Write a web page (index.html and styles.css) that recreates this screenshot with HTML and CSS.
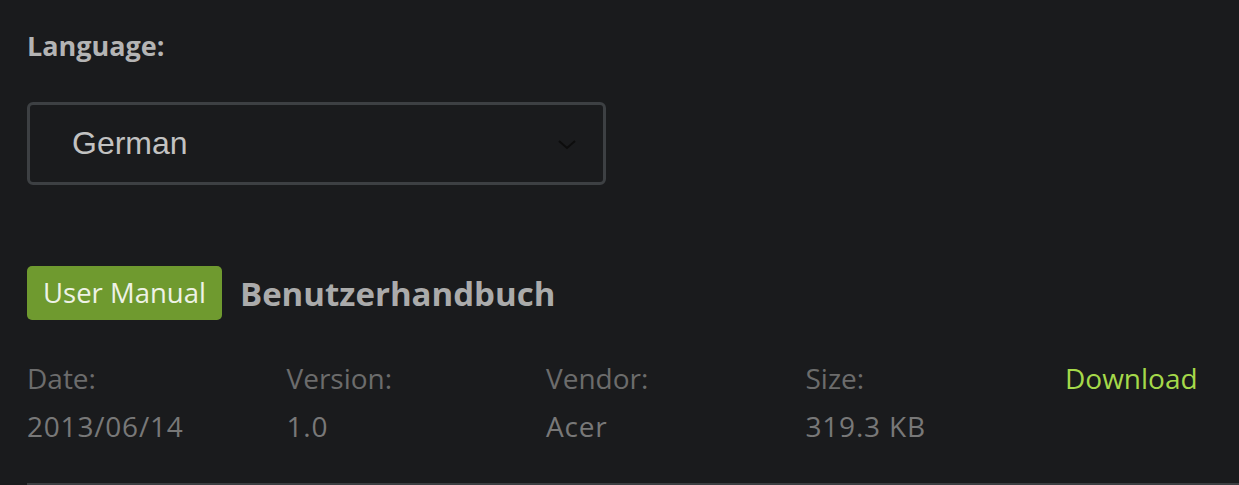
FILE: index.html
```html
<!DOCTYPE html>
<html>
<head>
  <title>Manual</title>
  <link rel="stylesheet" href="styles.css">
</head>
<body>
  <div class="page">
    <label class="field-label" for="lang">Language:</label>
    <div class="select">
      <span class="select-value">German</span>
      <svg class="chevron" width="18" height="10" viewBox="0 0 18 10">
        <path d="M1 1 L9 8 L17 1" fill="none" stroke="#0d0d0d" stroke-width="2"/>
      </svg>
    </div>

    <div class="doc">
      <div class="doc-head">
        <span class="badge">User Manual</span>
        <h2 class="doc-title">Benutzerhandbuch</h2>
      </div>
      <div class="meta">
        <div class="meta-col">
          <div class="meta-key">Date:</div>
          <div class="meta-val">2013/06/14</div>
        </div>
        <div class="meta-col">
          <div class="meta-key">Version:</div>
          <div class="meta-val">1.0</div>
        </div>
        <div class="meta-col">
          <div class="meta-key">Vendor:</div>
          <div class="meta-val">Acer</div>
        </div>
        <div class="meta-col">
          <div class="meta-key">Size:</div>
          <div class="meta-val">319.3 KB</div>
        </div>
        <div class="meta-col">
          <a class="download" href="#">Download</a>
        </div>
      </div>
    </div>
  </div>
</body>
</html>
```

FILE: styles.css
```css
body {
  margin: 0;
  padding: 0;
  background-color: #1a1b1d;
  font-family: 'Open Sans', sans-serif;
  overflow: hidden;
}

.page {
  padding: 28px 0 0 27px;
}

.field-label {
  display: block;
  font-size: 27px;
  font-weight: 700;
  color: #b4b4b4;
  line-height: 36px;
}

.select {
  margin-top: 38px;
  width: 504px;
  height: 77px;
  border: 3px solid #3d4043;
  border-radius: 6px;
  display: flex;
  align-items: center;
  justify-content: space-between;
  padding: 0 27px 0 42px;
}

.select-value {
  font-family: 'Liberation Sans', Arial, sans-serif;
  font-size: 32px;
  color: #c2c2c2;
}

.chevron {
  margin-top: 2px;
}

.doc {
  margin-top: 81px;
  border-bottom: 3px solid #3b3e41;
  padding-bottom: 33px;
}

.doc-head {
  display: flex;
  align-items: center;
  gap: 18px;
}

.badge {
  background-color: #6f9a2f;
  color: #eef2e6;
  font-size: 27.5px;
  border-radius: 5px;
  padding: 0 16px;
  height: 54px;
  line-height: 54px;
}

.doc-title {
  margin: 0;
  font-size: 33px;
  font-weight: 700;
  color: #ababab;
}

.meta {
  display: grid;
  grid-template-columns: repeat(4, 259.5px) auto;
  margin-top: 34px;
}

.meta-key,
.meta-val {
  font-size: 28px;
  line-height: 48px;
}

.meta-key {
  color: #6c6c6c;
}

.meta-val {
  color: #787878;
  letter-spacing: 0.8px;
}

.download {
  font-size: 28px;
  line-height: 48px;
  color: #a5d94a;
  text-decoration: none;
}
```
